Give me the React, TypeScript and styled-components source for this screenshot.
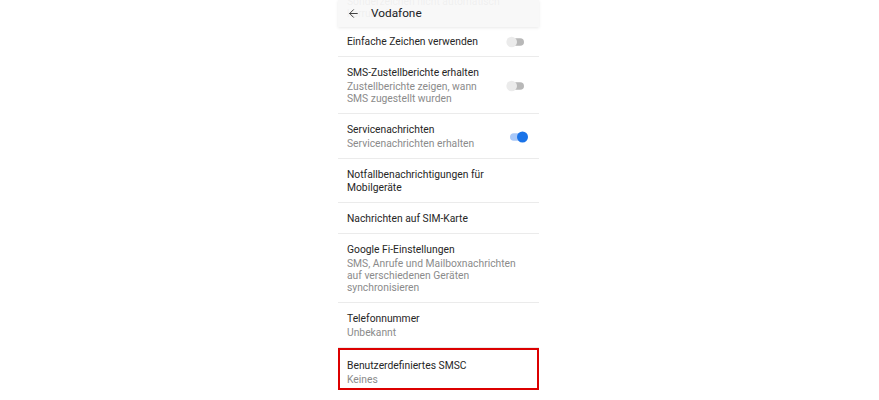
import React from "react";
import styled, { createGlobalStyle } from "styled-components";
import { ArrowLeft } from "lucide-react";

const Global = createGlobalStyle`
  html, body { margin: 0; padding: 0; background: #ffffff; }
  body {
    font-family: Roboto, "Noto Sans", "Liberation Sans", Arial, sans-serif;
    width: 879px;
    height: 400px;
    overflow: hidden;
    -webkit-font-smoothing: antialiased;
  }
`;

const Page = styled.div`
  padding-left: 338px;
`;

const Panel = styled.div`
  width: 201px;
  background: #ffffff;
`;

const TopStack = styled.div`
  display: grid;
  height: 27px;
`;

const Ghost = styled.div`
  grid-area: 1 / 1;
  margin-top: -4px;
  padding-left: 9px;
  font-size: 10.3px;
  line-height: 12px;
  color: #8f8f8f;
`;

const AppBar = styled.div`
  grid-area: 1 / 1;
  z-index: 1;
  height: 27px;
  display: flex;
  align-items: center;
  gap: 11px;
  padding-left: 9px;
  background: rgba(247, 247, 247, 0.92);
  box-shadow: 0 1px 3px rgba(0, 0, 0, 0.09);
  color: #202124;
`;

const BackIcon = styled(ArrowLeft)`
  flex: none;
  color: #3c3c3c;
`;

const BarTitle = styled.span`
  font-size: 11.8px;
  line-height: 15px;
`;

const List = styled.div`
  display: flex;
  flex-direction: column;
`;

const Row = styled.div<{ $top?: number; $bottom?: number; $marked?: boolean }>`
  display: flex;
  align-items: center;
  gap: 12px;
  padding: ${(p) => p.$top ?? 9}px 11px ${(p) => p.$bottom ?? 8}px 9px;
  border-bottom: 1px solid #ebebeb;
  ${(p) =>
    p.$marked &&
    `
    border: 2px solid #dc0000;
    padding-left: 7px;
    padding-right: 9px;
  `}
`;

const TextCol = styled.div`
  flex: 1;
  min-width: 0;
`;

const Title = styled.div`
  font-size: 10.3px;
  line-height: 13px;
  color: #262626;
`;

const Sub = styled.div`
  margin-top: 2px;
  font-size: 10.3px;
  line-height: 12px;
  color: #8b8b8b;
`;

const ToggleSvg = styled.svg`
  flex: none;
  display: block;
`;

function Toggle({ on }: { on?: boolean }) {
  return (
    <ToggleSvg width="22" height="12" viewBox="0 0 22 12">
      {on ? (
        <>
          <rect x="4" y="2.2" width="15" height="7.6" rx="3.8" fill="#a9c8f8" />
          <circle cx="16.5" cy="6" r="5.5" fill="#1a73e8" />
        </>
      ) : (
        <>
          <rect x="3" y="2.2" width="15" height="7.6" rx="3.8" fill="#b8b8b8" />
          <circle cx="5.7" cy="6" r="5.3" fill="#ebebeb" />
        </>
      )}
    </ToggleSvg>
  );
}

type Item = {
  title: string;
  sub?: string;
  toggle?: "on" | "off";
  top?: number;
  bottom?: number;
  marked?: boolean;
};

const items: Item[] = [
  { title: "Einfache Zeichen verwenden", toggle: "off", top: 8, bottom: 8 },
  {
    title: "SMS-Zustellberichte erhalten",
    sub: "Zustellberichte zeigen, wann SMS zugestellt wurden",
    toggle: "off",
  },
  { title: "Servicenachrichten", sub: "Servicenachrichten erhalten", toggle: "on" },
  { title: "Notfallbenachrichtigungen für Mobilgeräte" },
  { title: "Nachrichten auf SIM-Karte" },
  {
    title: "Google Fi-Einstellungen",
    sub: "SMS, Anrufe und Mailboxnachrichten auf verschiedenen Geräten synchronisieren",
  },
  { title: "Telefonnummer", sub: "Unbekannt" },
  { title: "Benutzerdefiniertes SMSC", sub: "Keines", marked: true, top: 9, bottom: 2 },
];

export default function App() {
  return (
    <>
      <Global />
      <Page>
        <Panel>
          <TopStack>
            <Ghost>
              Sonderzeichen nicht automatisch
              <br />
              korrumpieren
            </Ghost>
            <AppBar>
              <BackIcon size={13} strokeWidth={1.8} />
              <BarTitle>Vodafone</BarTitle>
            </AppBar>
          </TopStack>
          <List>
            {items.map((it) => (
              <Row key={it.title} $top={it.top} $bottom={it.bottom} $marked={it.marked}>
                <TextCol>
                  <Title>{it.title}</Title>
                  {it.sub && <Sub>{it.sub}</Sub>}
                </TextCol>
                {it.toggle && <Toggle on={it.toggle === "on"} />}
              </Row>
            ))}
          </List>
        </Panel>
      </Page>
    </>
  );
}
